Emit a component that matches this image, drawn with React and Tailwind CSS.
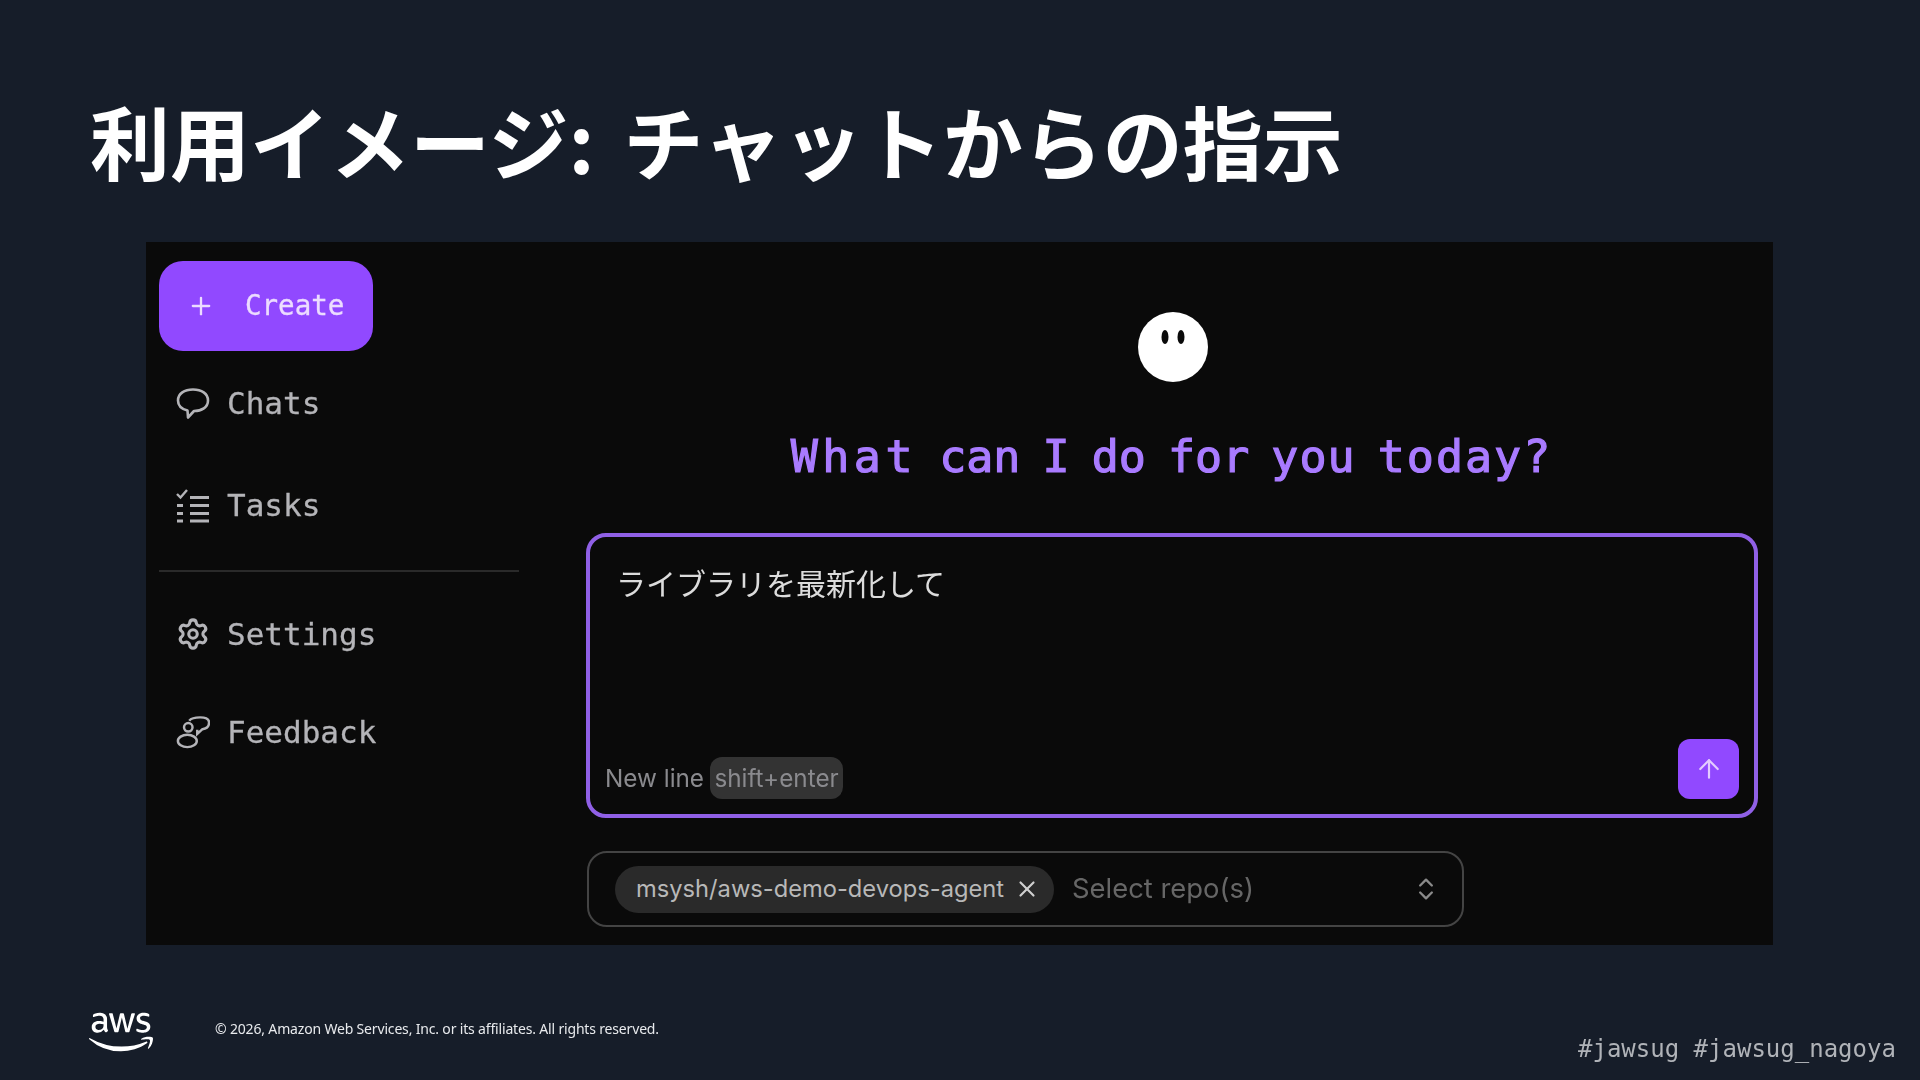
import { Plus, ArrowUp, X, ChevronsUpDown, Settings } from 'lucide-react';
import { FaAws } from 'react-icons/fa';

const mono = "font-['DejaVu_Sans_Mono',monospace]";
const sans = "font-['Inter','Noto_Sans_CJK_JP',sans-serif]";

// Sidebar icons that lucide doesn't have in this shape
function ChatIcon() {
  return (
    <svg width="34" height="34" viewBox="0 0 34 34" fill="none" stroke="currentColor" strokeWidth="2.600" strokeLinejoin="round">
      <path d="M17 2.500C25.500 2.500 32 6.500 32 13.500C32 20.500 25.500 24 18 24L12 30.500L11.500 23.500C5.500 22 2 18.500 2 13.500C2 6.500 8.500 2.500 17 2.500Z" />
    </svg>
  );
}

function TasksIcon() {
  return (
    <svg width="34" height="36" viewBox="0 0 34 36" fill="none" stroke="currentColor" strokeWidth="3.200">
      <path d="M1 6l3.500 3.500L11 2" strokeWidth="2.400" />
      <path d="M14 9.500h19M14 17.500h19M14 25.500h19M14 33h19" />
      <path d="M1 17.500h6M1 25.500h6M1 33h6" />
    </svg>
  );
}

function FeedbackIcon() {
  return (
    <svg width="36" height="36" viewBox="0 0 36 36" fill="none" stroke="currentColor" strokeWidth="2.600">
      <circle cx="13" cy="13" r="4.500" />
      <ellipse cx="12" cy="27.500" rx="10" ry="6.500" />
      <path d="M14 6C16 3.500 20 2.500 25.500 2.500C31 2.500 35 4 35 8C35 12 32 14.500 28 15L22.500 20L22.500 15.500" />
    </svg>
  );
}

function SideItem({ icon, label, height }) {
  return (
    <div className={`flex items-center gap-[17px] pl-[17px] text-[#b4b4b8] ${height}`}>
      <div className="w-[34px] flex justify-center shrink-0">{icon}</div>
      <span className={`${mono} text-[31px] leading-none [-webkit-text-stroke:0.3px]`}>{label}</span>
    </div>
  );
}

export default function App() {
  return (
    <div className="w-[1920px] h-[1080px] bg-[#161d29] overflow-hidden flex flex-col">
      <h1 className="h-[242px] pl-[90px] pt-[87px] text-white text-[80px] leading-[104px] font-bold [word-spacing:11px] font-['Noto_Sans_CJK_JP',sans-serif] whitespace-nowrap">
        利用イメージ: チャットからの指示
      </h1>

      <div className="ml-[146px] w-[1627px] h-[703px] bg-[#0a0a0a] flex">
        {/* sidebar */}
        <div className="w-[440px] shrink-0 pl-[13px] pt-[19px] blur-[0.5px]">
          <div className="w-[214px] h-[90px] rounded-[24px] bg-[#9149ff] flex items-center pl-[28px] text-[#ecdcff]">
            <Plus size={28} strokeWidth={2} />
            <span className={`${mono} ml-[30px] text-[27.500px] leading-none [-webkit-text-stroke:0.3px]`}>Create</span>
          </div>
          <div className="w-[360px] mt-px">
            <SideItem icon={<ChatIcon />} label="Chats" height="h-[103px]" />
            <SideItem icon={<TasksIcon />} label="Tasks" height="h-[101px]" />
            <div className="h-[2px] bg-[#2a2a2a] mt-[14px] mb-[14px]" />
            <SideItem icon={<Settings size={36} strokeWidth={2.200} />} label="Settings" height="h-[96px]" />
            <SideItem icon={<FeedbackIcon />} label="Feedback" height="h-[100px]" />
          </div>
        </div>

        {/* main */}
        <div className="flex-1 pt-[71px] blur-[0.5px]">
          <div className="w-[1171px] flex flex-col items-center">
            <svg width="70" height="70" viewBox="0 0 70 70" className="ml-[2px] -mt-px">
              <circle cx="35" cy="35" r="35" fill="#ffffff" />
              <ellipse cx="27" cy="25" rx="3.500" ry="7" fill="#0a0a0a" />
              <ellipse cx="43" cy="25" rx="3.500" ry="7" fill="#0a0a0a" />
            </svg>
            <div className={`${mono} mt-[45px] h-[60px] text-[45px] leading-[60px] text-[#a97bff] [-webkit-text-stroke:1.200px] [word-spacing:-5px] whitespace-nowrap`}>
              <span className="tracking-[4.500px]">What</span> can I do for <span className="tracking-[1px]">you</span> <span className="tracking-[2px]">today?</span>
            </div>
          </div>

          <div className="mt-[46px] w-[1172px] h-[285px] border-[4px] border-[#9060e6] rounded-[20px] flex flex-col justify-between pl-[15px] pr-[15px] pb-[15px] pt-[23px]">
            <div className="pl-[11px] text-[30px] leading-[44px] text-[#dcdcdc] font-['Noto_Sans_CJK_JP',sans-serif]">
              ライブラリを最新化して
            </div>
            <div className="flex items-end justify-between">
              <div className={`${sans} flex items-center gap-[6px] text-[24.300px] leading-none text-[#8a8a8e]`}>
                <span>New line</span>
                <span className="h-[42px] w-[133px] rounded-[12px] bg-[#333333] flex items-center justify-center">shift+enter</span>
              </div>
              <div className="w-[61px] h-[60px] rounded-[12px] bg-[#9149ff] flex items-center justify-center text-[#e3ccff]">
                <ArrowUp size={30} strokeWidth={1.750} />
              </div>
            </div>
          </div>

          <div className="mt-[33px] ml-px w-[877px] h-[76px] border-2 border-[#444444] rounded-[20px] flex items-center pl-[26px] pr-[22px]">
            <div className={`${sans} h-[47px] w-[439px] shrink-0 rounded-full bg-[#2a2a2a] flex items-center pl-[21px] text-[23.700px] leading-none text-[#b8b8b8] whitespace-nowrap`}>
              <span>msysh/aws-demo-devops-agent</span>
              <X size={26} strokeWidth={2} className="ml-[10px] text-[#cfcfcf]" />
            </div>
            <span className={`${sans} ml-[18px] text-[27.400px] leading-none text-[#666666]`}>Select repo(s)</span>
            <ChevronsUpDown size={28} strokeWidth={2} className="ml-auto text-[#8a8a8a]" />
          </div>
        </div>
      </div>

      {/* footer */}
      <div className="flex-1 relative flex items-start pl-[89px] pt-[57px]">
        <FaAws size={64} className="text-white -mt-[2px] shrink-0" />
        <span className="ml-[62px] mt-[17px] text-[14px] leading-[20px] tracking-[-0.17px] text-[#e8eaed] font-['Noto_Sans',sans-serif] whitespace-nowrap">
          © 2026, Amazon Web Services, Inc. or its affiliates. All rights reserved.
        </span>
        <span className={`${mono} absolute left-[1578px] top-[88px] text-[24px] leading-[32px] text-[#b0b3b8] whitespace-nowrap`}>
          #jawsug #jawsug_nagoya
        </span>
      </div>
    </div>
  );
}
